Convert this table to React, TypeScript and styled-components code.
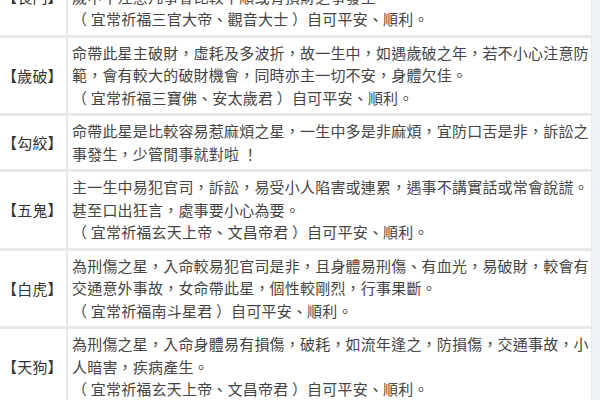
import React from "react";
import styled, { createGlobalStyle } from "styled-components";

const GlobalStyle = createGlobalStyle`
  html, body {
    margin: 0;
    padding: 0;
    background: #ffffff;
    overflow: hidden;
  }
`;

const Page = styled.div`
  width: 600px;
  height: 400px;
  overflow: hidden;
  display: flex;
  background: #ffffff;
  font-family: "Noto Sans CJK TC", "Noto Sans CJK SC", "DejaVu Sans", sans-serif;
`;

const Table = styled.div`
  flex: 1;
  display: flex;
  flex-direction: column;
  margin-top: -41px;
`;

const Strip = styled.div`
  width: 8px;
  background: #eef2f6;
  border-left: 1px solid #e6ebf0;
`;

const Row = styled.div<{ $first?: boolean }>`
  display: grid;
  grid-template-columns: 68px 1fr;
  border-top: ${(p) => (p.$first ? "none" : "3px solid #e7eaed")};
`;

const Label = styled.div`
  display: flex;
  align-items: center;
  padding-left: 2px;
  border-right: 2px solid #e6e8ea;
  font-size: 15px;
  letter-spacing: 0.2px;
  color: #333333;
  white-space: nowrap;
`;

const Content = styled.div`
  padding: 4px 0 4px 4px;
  font-size: 15px;
  letter-spacing: 0.2px;
  line-height: 22.5px;
  color: #454545;
`;

const Line = styled.div`
  white-space: nowrap;
`;

type Entry = { name: string; lines: string[] };

const entries: Entry[] = [
  {
    name: "【喪門】",
    lines: [
      "命帶此星，主易有喪孝之事，親友間多有喪事，故一生中，如遇流年逢之，",
      "歲中不注意凡事會比較不順或有損財之事發生。",
      "（ 宜常祈福三官大帝、觀音大士 ）自可平安、順利。",
    ],
  },
  {
    name: "【歲破】",
    lines: [
      "命帶此星主破財，虛耗及多波折，故一生中，如遇歲破之年，若不小心注意防",
      "範，會有較大的破財機會，同時亦主一切不安，身體欠佳。",
      "（ 宜常祈福三寶佛、安太歲君 ）自可平安、順利。",
    ],
  },
  {
    name: "【勾絞】",
    lines: [
      "命帶此星是比較容易惹麻煩之星，一生中多是非麻煩，宜防口舌是非，訴訟之",
      "事發生，少管閒事就對啦 ！",
    ],
  },
  {
    name: "【五鬼】",
    lines: [
      "主一生中易犯官司，訴訟，易受小人陷害或連累，遇事不講實話或常會說謊。",
      "甚至口出狂言，處事要小心為要。",
      "（ 宜常祈福玄天上帝、文昌帝君 ）自可平安、順利。",
    ],
  },
  {
    name: "【白虎】",
    lines: [
      "為刑傷之星，入命較易犯官司是非，且身體易刑傷、有血光，易破財，較會有",
      "交通意外事故，女命帶此星，個性較剛烈，行事果斷。",
      "（ 宜常祈福南斗星君 ）自可平安、順利。",
    ],
  },
  {
    name: "【天狗】",
    lines: [
      "為刑傷之星，入命身體易有損傷，破耗，如流年逢之，防損傷，交通事故，小",
      "人暗害，疾病產生。",
      "（ 宜常祈福玄天上帝、文昌帝君 ）自可平安、順利。",
    ],
  },
];

export default function App() {
  return (
    <>
      <GlobalStyle />
      <Page>
        <Table>
          {entries.map((entry, i) => (
            <Row key={entry.name} $first={i === 0}>
              <Label>{entry.name}</Label>
              <Content>
                {entry.lines.map((line) => (
                  <Line key={line}>{line}</Line>
                ))}
              </Content>
            </Row>
          ))}
        </Table>
        <Strip />
      </Page>
    </>
  );
}
